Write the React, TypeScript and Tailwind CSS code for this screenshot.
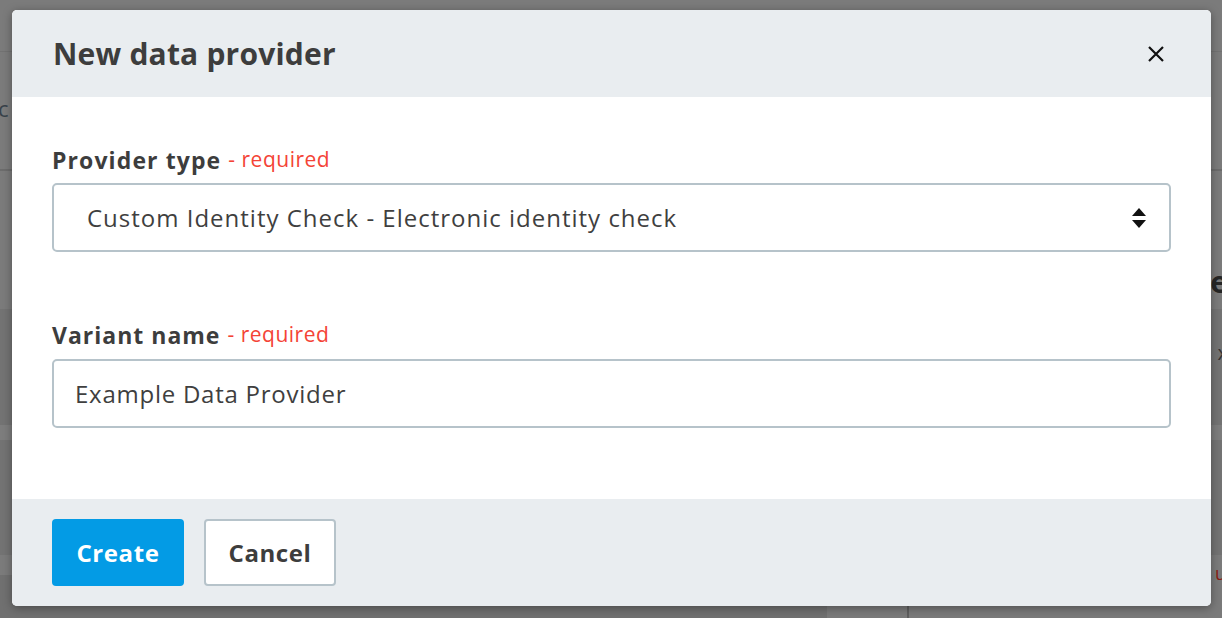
import React from "react";

const font = { fontFamily: "'Open Sans', Lato, sans-serif" };

export default function App() {
  return (
    <div className="relative w-[1222px] h-[618px] overflow-hidden bg-[#7b7b7b]" style={font}>
      {/* dimmed page behind */}
      <div className="flex flex-col w-full h-full">
        <div className="h-[52px] border-b border-[#727272]" />
        <div className="h-[119px] border-b-2 border-[#6c6c6c] flex items-center">
          <span className="text-[22px] text-[#38424a] -ml-[2px] -mt-[4px]">c</span>
        </div>
        <div className="h-[138px]" />
        <div className="h-[116px] bg-[#737373] flex flex-col items-end">
          <span className="text-[30px] font-bold text-[#262626] -mr-[6px] -mt-[50px]">e</span>
          <span className="text-[20px] text-[#333] -mr-[6px] mt-[34px]">x</span>
        </div>
        <div className="h-[15px] bg-[#7d7d7d]" />
        <div className="h-[115px] bg-[#737373]" />
        <div className="h-[20px] bg-[#7b7b7b]" />
        <div className="flex-1 flex">
          <div className="w-[827px] bg-[#707070]" />
          <div className="w-[80px] bg-[#7a7a7a]" />
          <div className="w-[2px] bg-[#5e5e5e]" />
          <div className="flex-1 bg-[#7a7a7a]" />
        </div>
      </div>
      <span className="absolute right-[-4px] top-[560px] text-[18px] text-[#8a1c12]">u</span>

      {/* modal */}
      <div className="absolute left-[12px] top-[10px] w-[1199px] h-[596px] rounded-[5px] bg-white shadow-[0_2px_10px_rgba(0,0,0,0.35)] flex flex-col overflow-hidden">
        <div className="h-[87px] bg-[#e9edf0] flex items-center justify-between pl-[41px] pr-[46px]">
          <h1 className="text-[30px] font-bold text-[#3d3d3d] tracking-[0.2px]">New data provider</h1>
          <svg width="18" height="18" viewBox="0 0 18 18" className="mt-[1px]">
            <path d="M2 2 L16 16 M16 2 L2 16" stroke="#111" strokeWidth="2.2" strokeLinecap="butt" />
          </svg>
        </div>
        <div className="h-[402px] px-[40px] pt-[48px] flex flex-col">
          <label className="h-[30px] flex items-center text-[23px] text-[#3d3d3d] font-bold tracking-[1.1px]">
            Provider type<span className="font-normal text-[#f44336] text-[21px] ml-[7px] tracking-[0.5px]">- required</span>
          </label>
          <div className="mt-[8px] h-[69px] rounded-[5px] border-2 border-[#b6c3ca] flex items-center justify-between pl-[33px] pr-[22px]">
            <span className="text-[24px] text-[#3f3f3f] tracking-[1px]">Custom Identity Check - Electronic identity check</span>
            <svg width="16" height="22" viewBox="0 0 16 22">
              <path d="M1 9 L8 1 L15 9 Z" fill="#111" />
              <path d="M1 13 L15 13 L8 21 Z" fill="#111" />
            </svg>
          </div>
          <label className="mt-[68px] h-[30px] flex items-center text-[23px] text-[#3d3d3d] font-bold tracking-[1px]">
            Variant name<span className="font-normal text-[#f44336] text-[21px] ml-[7px] tracking-[0.5px]">- required</span>
          </label>
          <div className="mt-[9px] h-[69px] rounded-[5px] border-2 border-[#b6c3ca] flex items-center pl-[21px]">
            <span className="text-[24px] text-[#3f3f3f] tracking-[0.75px]">Example Data Provider</span>
          </div>
        </div>
        <div className="flex-1 bg-[#e9edf0] px-[40px] pt-[20px] flex gap-[20px]">
          <button className="w-[132px] h-[67px] rounded-[4px] bg-[#039be5] text-white text-[24px] font-bold tracking-[0.6px]">Create</button>
          <button className="w-[132px] h-[67px] rounded-[4px] bg-white border-2 border-[#b6c3ca] text-[#3d3d3d] text-[24px] font-bold tracking-[0.6px]">Cancel</button>
        </div>
      </div>
    </div>
  );
}
